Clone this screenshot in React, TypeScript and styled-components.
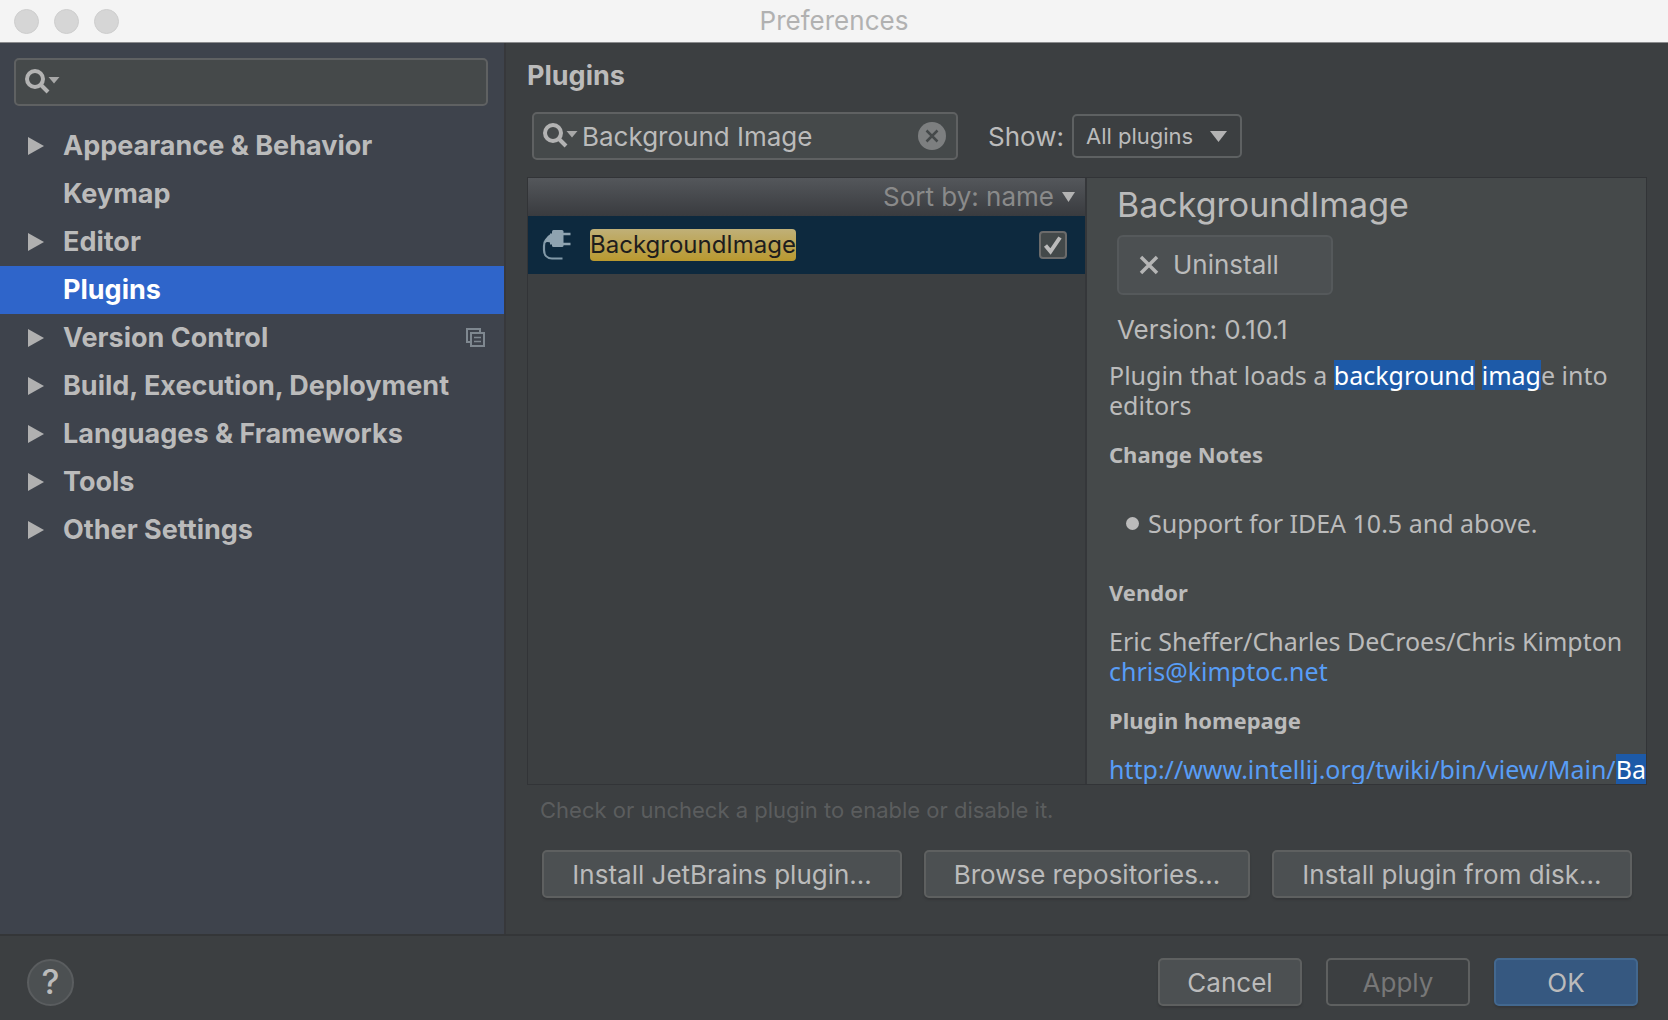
import React, { useState } from "react";
import styled, { createGlobalStyle, css } from "styled-components";

const UI_FONT = `Inter, "Liberation Sans", sans-serif`;
const DOC_FONT = `"Noto Sans", "Open Sans", sans-serif`;

const GlobalStyle = createGlobalStyle`
  *, *::before, *::after { box-sizing: border-box; }
  body {
    margin: 0;
    background: #3c3f41;
    color: #bbbbbb;
    font-family: ${UI_FONT};
    font-size: 26px;
    line-height: 30px;
  }
  button, input, select { font: inherit; color: inherit; margin: 0; }
  h1, h2, h3, p, ul { margin: 0; padding: 0; font: inherit; }
`;

const Window = styled.div`
  display: flex;
  flex-direction: column;
  height: 100vh;
  overflow: hidden;
`;

const TitleBar = styled.header`
  display: grid;
  grid-template-columns: 1fr auto 1fr;
  align-items: center;
  flex: none;
  height: 43px;
  padding: 0 14px;
  background: #f4f4f4;
  border-bottom: 1px solid #8a8b8d;
`;

const Lights = styled.div`
  display: flex;
  gap: 15px;
`;

const Light = styled.span`
  width: 25px;
  height: 25px;
  border-radius: 50%;
  background: #d6d6d6;
  border: 1px solid #cecece;
`;

const WindowTitle = styled.h1`
  color: #b1b1b1;
`;

const Body = styled.div`
  display: flex;
  flex: 1;
  min-height: 0;
`;

const Sidebar = styled.aside`
  flex: none;
  width: 506px;
  padding-top: 15px;
  background: #3e434c;
  border-right: 2px solid #37383b;
`;

const SearchBox = styled.label<{ $sidebar?: boolean }>`
  display: flex;
  align-items: center;
  height: 48px;
  padding: 0 10px 0 8px;
  background: #45494a;
  border: 2px solid #5f6162;
  border-radius: 5px;
  ${(p) =>
    p.$sidebar
      ? css`
          margin: 0 16px 16px 14px;
        `
      : css`
          width: 426px;
        `}
`;

const SearchInput = styled.input`
  flex: 1;
  min-width: 0;
  padding: 2px 4px 0;
  background: none;
  border: 0;
  outline: 0;
`;

const ClearButton = styled.button`
  display: flex;
  padding: 0;
  background: none;
  border: 0;
`;

const Tree = styled.nav`
  display: flex;
  flex-direction: column;
`;

const TreeItem = styled.a<{ $selected?: boolean }>`
  display: grid;
  grid-template-columns: 35px 1fr auto;
  align-items: center;
  height: 48px;
  padding: 0 19px 0 28px;
  color: ${(p) => (p.$selected ? "#ffffff" : "#bbbbbb")};
  background: ${(p) => (p.$selected ? "#2f65ca" : "transparent")};
  font-size: 27px;
  font-weight: 700;
  text-decoration: none;
`;

const Main = styled.main`
  display: flex;
  flex-direction: column;
  flex: 1;
  min-width: 0;
  padding: 18px 21px 36px 21px;
`;

const PageTitle = styled.h2`
  font-size: 27px;
  font-weight: 700;
`;

const FilterBar = styled.div`
  display: flex;
  align-items: center;
  padding: 21px 0 17px 5px;
`;

const ShowLabel = styled.label`
  margin-left: 30px;
  padding-top: 2px;
`;

const SelectWrap = styled.div`
  display: grid;
  align-items: center;
  width: 170px;
  margin-left: 8px;
  > * { grid-area: 1 / 1; }
  > svg { justify-self: end; margin-right: 15px; pointer-events: none; }
`;

const Select = styled.select`
  appearance: none;
  width: 100%;
  height: 44px;
  padding: 0 12px;
  background: #3c3f41;
  border: 2px solid #5e6162;
  border-radius: 5px;
  font-size: 22px;
`;

const Panel = styled.div`
  display: grid;
  grid-template-columns: 1fr 1fr;
  grid-template-rows: 100%;
  flex: 1;
  min-height: 0;
  border: 1px solid #323437;
`;

const ListPane = styled.section`
  border-right: 2px solid #35373a;
`;

const SortBar = styled.div`
  display: flex;
  justify-content: flex-end;
  height: 38px;
  padding-right: 10px;
  background: linear-gradient(#54575b, #393b3f);
`;

const SortButton = styled.button`
  display: flex;
  align-items: center;
  gap: 8px;
  padding: 0;
  color: #8a8a8a;
  background: none;
  border: 0;
`;

const PluginRow = styled.label`
  display: grid;
  grid-template-columns: 48px 1fr auto;
  align-items: center;
  height: 58px;
  padding: 0 18px 0 14px;
  background: #0d293e;
`;

const NameMatch = styled.span`
  justify-self: start;
  padding: 1px 0;
  color: #1d1d1d;
  background: linear-gradient(#c0b078, #b9992f);
  border-radius: 4px;
  font-size: 24px;
`;

const CheckWrap = styled.span`
  display: grid;
  place-items: center;
  > * { grid-area: 1 / 1; }
  > svg { pointer-events: none; }
`;

const CheckInput = styled.input`
  appearance: none;
  width: 28px;
  height: 28px;
  background: #43494a;
  border: 2px solid #6b6b6b;
  border-radius: 4px;
`;

const Details = styled.section`
  min-width: 0;
  overflow: hidden;
  padding: 8px 0 0 22px;
  background: #45494a;
`;

const Summary = styled.div`
  display: flex;
  flex-direction: column;
  align-items: flex-start;
  padding-left: 8px;
`;

const PluginTitle = styled.h2`
  font-size: 34px;
  line-height: 38px;
`;

const UninstallButton = styled.button`
  display: flex;
  align-items: center;
  gap: 14px;
  width: 216px;
  height: 60px;
  margin: 11px 0 20px;
  padding: 0 20px;
  background: #4c5052;
  border: 2px solid #55595b;
  border-radius: 6px;
`;

const Version = styled.p`
  font-size: 26px;
`;

const Doc = styled.div`
  font-family: ${DOC_FONT};
  font-size: 25px;
  line-height: 30px;
  padding-top: 15px;
`;

const DocHeading = styled.h3`
  margin: 19px 0;
  font-size: 22px;
  font-weight: 700;
`;

const DocText = styled.p`
  padding-right: 22px;
`;

const DocList = styled.ul`
  margin: 39px 0;
  list-style: none;
`;

const DocItem = styled.li`
  display: flex;
  align-items: center;
  gap: 9px;
  padding-left: 17px;
  &::before {
    content: "";
    width: 13px;
    height: 13px;
    border-radius: 50%;
    background: #bbbbbb;
  }
`;

const DocLink = styled.a`
  color: #589df6;
  text-decoration: none;
  white-space: nowrap;
`;

const Hit = styled.mark`
  display: inline-block;
  color: #ffffff;
  background: #1d5aa8;
`;

const Hint = styled.p`
  padding: 10px 0 25px 13px;
  color: #5b5d5e;
  font-size: 22px;
`;

const Actions = styled.div`
  display: flex;
  gap: 22px;
  padding: 0 15px;
`;

const Button = styled.button<{ $primary?: boolean; $grow?: number }>`
  height: 48px;
  padding: 2px 0 0;
  min-width: 144px;
  flex: ${(p) => (p.$grow ? `${p.$grow} 1 0` : "none")};
  background: ${(p) => (p.$primary ? "#365880" : "#4c5052")};
  border: 2px solid ${(p) => (p.$primary ? "#43688f" : "#5e6060")};
  border-radius: 5px;
  box-shadow: 0 2px 2px #353739;
  white-space: nowrap;
  &:disabled {
    color: #777777;
    background: #3c3f41;
    box-shadow: none;
  }
`;

const Footer = styled.footer`
  display: flex;
  align-items: center;
  gap: 24px;
  flex: none;
  height: 86px;
  padding: 8px 30px 0 27px;
  border-top: 2px solid #343638;
`;

const HelpButton = styled.button`
  width: 47px;
  height: 47px;
  margin-right: auto;
  padding: 0;
  background: #4c5052;
  border: 2px solid #5a5d5f;
  border-radius: 50%;
  font-size: 34px;
  font-weight: 500;
`;

const SearchIcon = () => (
  <svg width="36" height="28" viewBox="0 0 36 28" fill="none" aria-hidden="true">
    <circle cx="11" cy="11" r="8" stroke="#b3b3b3" strokeWidth="4" />
    <path d="M16.5 16.5 L24 24" stroke="#b3b3b3" strokeWidth="4" />
    <path d="M24.5 9 H35.5 L30 15.5 Z" fill="#a8a8a8" />
  </svg>
);

const ClearIcon = () => (
  <svg width="28" height="28" viewBox="0 0 28 28" aria-hidden="true">
    <circle cx="14" cy="14" r="14" fill="#7d7f80" />
    <path d="M8.500 8.500 L19.500 19.500 M19.500 8.500 L8.500 19.500" stroke="#45494a" strokeWidth="2.500" />
  </svg>
);

const Expander = () => (
  <svg width="16" height="18" viewBox="0 0 16 18" aria-hidden="true">
    <path d="M0 0 L16 9 L0 18 Z" fill="#b0b0b0" />
  </svg>
);

const DownArrow = ({ width, height }: { width: number; height: number }) => (
  <svg width={width} height={height} viewBox="0 0 16 12" preserveAspectRatio="none" aria-hidden="true">
    <path d="M0 0 H16 L8 12 Z" fill="#b3b3b3" />
  </svg>
);

const ProjectIcon = () => (
  <svg width="19" height="20" viewBox="0 0 19 20" fill="none" stroke="#7f8890" strokeWidth="2" aria-label="For current project">
    <path d="M5 14 H1 V1 H14 V4" />
    <rect x="5" y="5" width="13" height="13" />
    <path d="M8 9.500 H15 M8 13.500 H15" strokeWidth="1.500" />
  </svg>
);

const PlugIcon = () => (
  <svg width="30" height="32" viewBox="0 0 30 32" fill="none" aria-hidden="true">
    <path d="M9 8 C4 9 2 13 2 17 V21 C2 26 5 29.500 10 29.500 H20.500" stroke="#8299a8" strokeWidth="2.200" />
    <path d="M3 14 C3.500 9 6 6 9 5 V14 C6.500 12.500 4.500 12.500 3 14 Z" fill="#8fa3b0" />
    <rect x="8" y="4.500" width="4" height="11" fill="#8fa3b0" />
    <rect x="10" y="1" width="11.500" height="17" rx="1.500" fill="#8fa3b0" />
    <path d="M21 5 H28.500 M21 15 H28.500" stroke="#8fa3b0" strokeWidth="2.400" />
  </svg>
);

const CheckIcon = () => (
  <svg width="20" height="22" viewBox="0 0 20 22" fill="none" aria-hidden="true">
    <path d="M2.500 11.500 L7.500 17.500 L17 3.500" stroke="#bbbbbb" strokeWidth="4" />
  </svg>
);

const CrossIcon = () => (
  <svg width="20" height="20" viewBox="0 0 20 20" fill="none" aria-hidden="true">
    <path d="M2 2 L18 18 M18 2 L2 18" stroke="#b5b5b5" strokeWidth="3.500" />
  </svg>
);

const SECTIONS = [
  { name: "Appearance & Behavior", expandable: true },
  { name: "Keymap" },
  { name: "Editor", expandable: true },
  { name: "Plugins" },
  { name: "Version Control", expandable: true, project: true },
  { name: "Build, Execution, Deployment", expandable: true },
  { name: "Languages & Frameworks", expandable: true },
  { name: "Tools", expandable: true },
  { name: "Other Settings", expandable: true },
];

export default function App() {
  const [query, setQuery] = useState("Background Image");
  const [section, setSection] = useState("Plugins");
  const [enabled, setEnabled] = useState(true);

  return (
    <>
      <GlobalStyle />
      <Window>
        <TitleBar>
          <Lights>
            <Light />
            <Light />
            <Light />
          </Lights>
          <WindowTitle>Preferences</WindowTitle>
        </TitleBar>

        <Body>
          <Sidebar>
            <SearchBox $sidebar>
              <SearchIcon />
              <SearchInput type="text" aria-label="Search settings" />
            </SearchBox>
            <Tree aria-label="Settings">
              {SECTIONS.map((s) => (
                <TreeItem
                  key={s.name}
                  href="#"
                  $selected={s.name === section}
                  onClick={() => setSection(s.name)}
                >
                  <span>{s.expandable && <Expander />}</span>
                  <span>{s.name}</span>
                  {s.project && <ProjectIcon />}
                </TreeItem>
              ))}
            </Tree>
          </Sidebar>

          <Main>
            <PageTitle>Plugins</PageTitle>
            <FilterBar>
              <SearchBox>
                <SearchIcon />
                <SearchInput
                  type="text"
                  aria-label="Search plugins"
                  value={query}
                  onChange={(e) => setQuery(e.target.value)}
                />
                <ClearButton type="button" aria-label="Clear" onClick={() => setQuery("")}>
                  <ClearIcon />
                </ClearButton>
              </SearchBox>
              <ShowLabel htmlFor="show">Show:</ShowLabel>
              <SelectWrap>
                <Select id="show">
                  <option>All plugins</option>
                  <option>Enabled</option>
                  <option>Disabled</option>
                </Select>
                <DownArrow width={17} height={11} />
              </SelectWrap>
            </FilterBar>

            <Panel>
              <ListPane>
                <SortBar>
                  <SortButton type="button">
                    Sort by: name
                    <DownArrow width={13} height={10} />
                  </SortButton>
                </SortBar>
                <PluginRow>
                  <PlugIcon />
                  <NameMatch>BackgroundImage</NameMatch>
                  <CheckWrap>
                    <CheckInput
                      type="checkbox"
                      checked={enabled}
                      onChange={(e) => setEnabled(e.target.checked)}
                    />
                    {enabled && <CheckIcon />}
                  </CheckWrap>
                </PluginRow>
              </ListPane>

              <Details>
                <Summary>
                  <PluginTitle>BackgroundImage</PluginTitle>
                  <UninstallButton type="button">
                    <CrossIcon />
                    Uninstall
                  </UninstallButton>
                  <Version>Version: 0.10.1</Version>
                </Summary>
                <Doc>
                  <DocText>
                    Plugin that loads a <Hit>background</Hit> <Hit>imag</Hit>e into editors
                  </DocText>
                  <DocHeading>Change Notes</DocHeading>
                  <DocList>
                    <DocItem>Support for IDEA 10.5 and above.</DocItem>
                  </DocList>
                  <DocHeading>Vendor</DocHeading>
                  <DocText>
                    Eric Sheffer/Charles DeCroes/Chris Kimpton
                    <br />
                    <DocLink href="mailto:chris@kimptoc.net">chris@kimptoc.net</DocLink>
                  </DocText>
                  <DocHeading>Plugin homepage</DocHeading>
                  <DocLink href="#homepage">
                    http://www.intellij.org/twiki/bin/view/Main/<Hit>Background</Hit>
                  </DocLink>
                </Doc>
              </Details>
            </Panel>

            <Hint>Check or uncheck a plugin to enable or disable it.</Hint>
            <Actions>
              <Button type="button" $grow={360}>Install JetBrains plugin...</Button>
              <Button type="button" $grow={325}>Browse repositories...</Button>
              <Button type="button" $grow={360}>Install plugin from disk...</Button>
            </Actions>
          </Main>
        </Body>

        <Footer>
          <HelpButton type="button" aria-label="Help">?</HelpButton>
          <Button type="button">Cancel</Button>
          <Button type="button" disabled>Apply</Button>
          <Button type="button" $primary>OK</Button>
        </Footer>
      </Window>
    </>
  );
}
